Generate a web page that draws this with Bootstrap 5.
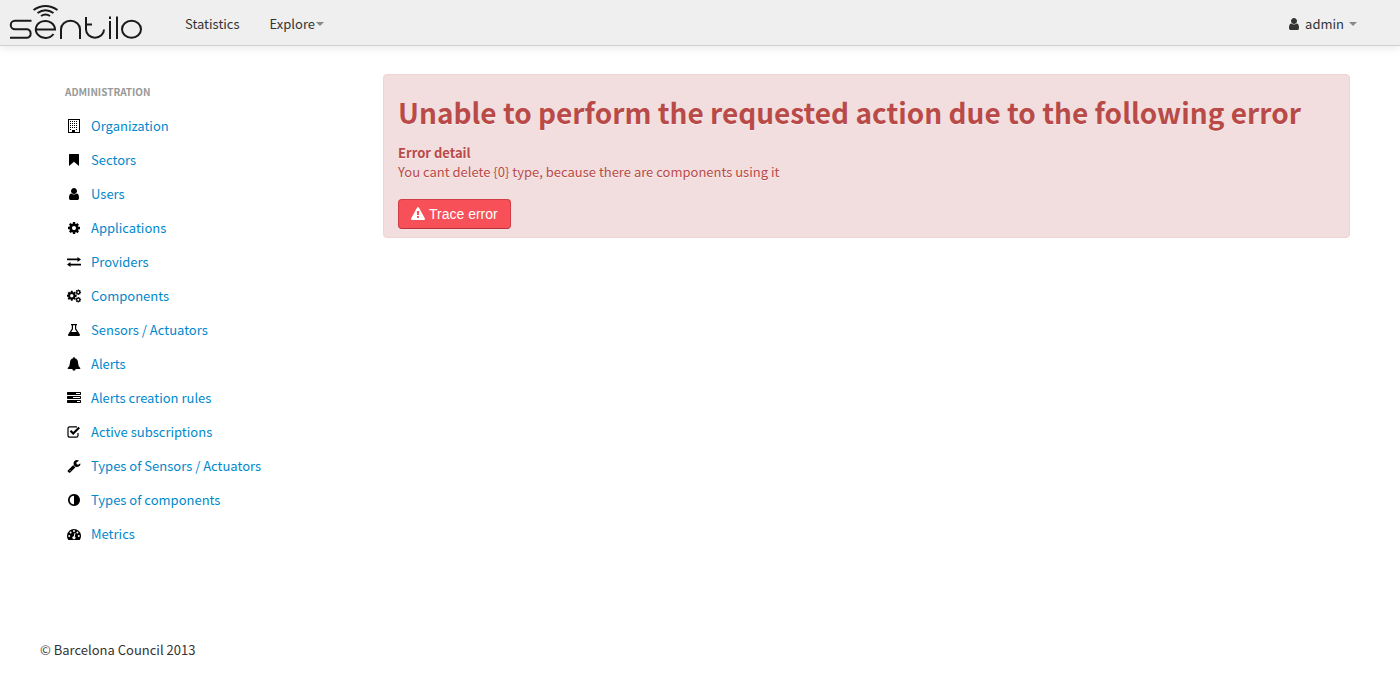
<!DOCTYPE html>
<html lang="en">
<head>
<meta charset="utf-8">
<meta name="viewport" content="width=device-width, initial-scale=1">
<title>Sentilo</title>
<link href="https://cdn.jsdelivr.net/npm/bootstrap@5.3.0/dist/css/bootstrap.min.css" rel="stylesheet">
<style>
body { font-family: "Noto Sans CJK SC", sans-serif; font-size: 13px; line-height: 20px; color: #333; }
.topbar { background: #efefef; border-bottom: 1px solid #d0d0d0; box-shadow: 0 1px 10px rgba(0,0,0,.1); min-height: 46px; }
.topbar .navbar-nav .nav-link { color: #333; padding: 2px 15px 0; }
.topbar .dropdown-toggle::after { border-width: 4px 4px 0; border-top-color: #888; margin-left: 1px; vertical-align: 3px; }
.topbar .account::after { margin-left: 5px; }
.icon { width: 14px; height: 14px; fill: currentColor; flex: none; }
.page { padding: 28px 50px 0; }
.side { padding: 8px 15px; }
.side h2 { font-size: 10px; font-weight: 700; line-height: 20px; color: #999; margin: 0 0 7px; }
.side a { color: #08c; text-decoration: none; line-height: 20px; padding: 7px 0; }
.side .icon { color: #000; margin: 0 10px 0 2px; }
.error-box { background: #f2dede; border: 1px solid #eed3d7; border-radius: 4px; color: #b94a48; padding: 17px 14px 8px; text-shadow: 0 1px 0 rgba(255,255,255,.5); }
.error-box h1 { font-size: 28px; line-height: 40px; font-weight: 700; margin: 0 0 11px; }
.error-box p { line-height: 19px; margin: 0 0 18px; }
.btn-trace { background: #f85058; border: 1px solid #d23c46; border-bottom-color: #b8323c; color: #fff; font: 14px/20px "Liberation Sans", sans-serif; padding: 4px 12px; border-radius: 4px; }
.btn-trace:hover { background: #e0404a; color: #fff; }
.site-footer { padding: 81px 40px 40px; }
</style>
</head>
<body>
<svg class="d-none" aria-hidden="true">
<symbol id="user" viewBox="0 0 1792 1792"><path d="M1536 1399q0 109-62.500 187t-150.500 78h-854q-88 0-150.500-78t-62.500-187q0-85 8.500-160.500t31.500-152 58.500-131 94-89 134.500-34.500q131 128 313 128t313-128q76 0 134.500 34.500t94 89 58.500 131 31.500 152 8.500 160.500zm-256-887q0 159-112.500 271.500t-271.500 112.500-271.500-112.500-112.500-271.500 112.500-271.500 271.500-112.500 271.500 112.500 112.500 271.500z"/></symbol>
<symbol id="cog" viewBox="0 0 1792 1792"><path d="M1152 896q0-106-75-181t-181-75-181 75-75 181 75 181 181 75 181-75 75-181zm512-109v222q0 12-8 23t-20 13l-185 28q-19 54-39 91 35 50 107 138 10 12 10 25t-9 23q-27 37-99 108t-94 71q-12 0-26-9l-138-108q-44 23-91 38-16 136-29 186-7 28-36 28h-222q-14 0-24.500-8.500t-11.500-21.500l-28-184q-49-16-90-37l-141 107q-10 9-25 9-14 0-25-11-126-114-165-168-7-10-7-23 0-12 8-23 15-21 51-66.500t54-70.500q-27-50-41-99l-183-27q-13-2-21-12.500t-8-23.500v-222q0-12 8-23t19-13l186-28q14-46 39-92-40-57-107-138-10-12-10-24 0-10 9-23 26-36 98.500-107.500t94.500-71.500q13 0 26 10l138 107q44-23 91-38 16-136 29-186 7-28 36-28h222q14 0 24.500 8.500t11.500 21.500l28 184q49 16 90 37l142-107q9-9 24-9 13 0 25 10 129 119 165 170 7 8 7 22 0 12-8 23-15 21-51 66.500t-54 70.500q26 50 41 98l183 28q13 2 21 12.500t8 23.500z"/></symbol>
<symbol id="cogs" viewBox="0 0 14 14"><use href="#cog" x="-1" y="1" width="11.500" height="11.500"/><use href="#cog" x="8" y="0" width="6.500" height="6.500"/><use href="#cog" x="8" y="7.500" width="6.500" height="6.500"/></symbol>
<symbol id="warning" viewBox="0 0 1792 1792"><path d="M1024 1375v-190q0-14-9.500-23.500t-22.500-9.500h-192q-13 0-22.500 9.500t-9.500 23.500v190q0 14 9.500 23.500t22.500 9.500h192q13 0 22.500-9.500t9.500-23.500zm-2-374l18-459q0-12-10-19-13-11-24-11h-220q-11 0-24 11-10 7-10 21l17 457q0 10 10 16.500t24 6.500h185q14 0 23.500-6.500t10.500-16.500zm-14-934l768 1408q35 63-2 126-17 29-46.500 46t-63.500 17h-1536q-34 0-63.500-17t-46.500-46q-37-63-2-126l768-1408q17-31 47-49t65-18 65 18 47 49z"/></symbol>
<symbol id="adjust" viewBox="0 0 1792 1792"><path d="M896 1440v-1088q-148 0-273 73t-198 198-73 273 73 273 198 198 273 73zm768-544q0 209-103 385.500t-279.500 279.500-385.500 103-385.500-103-279.500-279.500-103-385.500 103-385.500 279.500-279.500 385.500-103 385.500 103 279.500 279.500 103 385.500z"/></symbol>
<symbol id="wrench" viewBox="0 0 1792 1792"><path d="M448 1472q0-26-19-45t-45-19-45 19-19 45 19 45 45 19 45-19 19-45zm644-420l-682 682q-37 37-90 37-52 0-91-37l-106-108q-38-36-38-90 0-53 38-91l681-681q39 98 114.500 173.500t173.500 114.500zm634-435q0 39-23 106-47 134-164.500 217.500t-258.500 83.500q-185 0-316.500-131.500t-131.500-316.500 131.500-316.500 316.500-131.500q58 0 121.500 16.500t107.500 46.500q16 11 16 28t-16 28l-293 169v224l193 107q5-3 79-48.500t135.500-81 70.500-35.500q15 0 23.500 10t8.500 25z"/></symbol>
<symbol id="building" viewBox="0 0 14 14"><path fill-rule="evenodd" d="M1 0h12v14H1zM2 1v12h3v-2h3v2h4V1z"/><path d="M3 2h1v1H3zm2 0h1v1H5zm2 0h1v1H7zm2 0h1v1H9zM3 4h1v1H3zm2 0h1v1H5zm2 0h1v1H7zm2 0h1v1H9zM3 6h1v1H3zm2 0h1v1H5zm2 0h1v1H7zm2 0h1v1H9zM3 8h1v1H3zm2 0h1v1H5zm2 0h1v1H7zm2 0h1v1H9zM3 10h1v1H3zm6 0h1v1H9z"/></symbol>
<symbol id="bookmark" viewBox="0 0 14 14"><path d="M2.600 1h8.800q.6 0 .6.600V13L7 8.700 2 13V1.600Q2 1 2.600 1z"/></symbol>
<symbol id="exchange" viewBox="0 0 14 14"><path d="M0 3.500h10.500V2L14 4.500 10.500 7V5.300H0zM14 8.700H3.500V7L0 9.600l3.500 2.400v-1.500H14z"/></symbol>
<symbol id="flask" viewBox="0 0 14 14"><path fill-rule="evenodd" d="M4 1h6v1.200H9.200v3.600l3.600 5.500Q13.600 13 12 13H2Q.4 13 1.200 11.300l3.600-5.500V2.200H4zm2 1.200v4L4.200 9h5.600L8 6.200v-4z"/></symbol>
<symbol id="bell" viewBox="0 0 14 14"><path d="M7 0q.9 0 .8 1.200Q11 2 11 5.500q0 4 2.500 5.700-.2.800-1 .8H8.700Q8.500 13.700 7 13.700T5.300 12H1.500q-.8 0-1-.8Q3 9.500 3 5.500 3 2 6.200 1.200 6.100 0 7 0z"/></symbol>
<symbol id="tasks" viewBox="0 0 14 14"><path fill-rule="evenodd" d="M.5 1h13l.5.500v2l-.5.500H.5L0 3.500v-2zM9 2v1h4V2zM.5 5h13l.5.500v2l-.5.500H.5L0 7.500v-2zM6 6v1h7V6zM.5 9h13l.5.500v2l-.5.500H.5L0 11.500v-2zM10 10v1h3v-1z"/></symbol>
<symbol id="check" viewBox="0 0 14 14"><path d="M11 8v2.500a1.700 1.700 0 0 1-1.700 1.700H2.700A1.700 1.700 0 0 1 1 10.500v-7a1.700 1.700 0 0 1 1.700-1.700h7.300" fill="none" stroke="currentColor" stroke-width="1.200"/><path d="M3.500 5.800l2.700 2.700 6-6" fill="none" stroke="currentColor" stroke-width="2.200"/></symbol>
<symbol id="gauge" viewBox="0 0 14 14"><path fill-rule="evenodd" d="M1.300 13A7 7 0 1 1 12.700 13zM1.200 9a1 1 0 1 0 2 0 1 1 0 0 0-2 0zM2.600 5.500a1 1 0 1 0 2 0 1 1 0 0 0-2 0zM6 4a1 1 0 1 0 2 0 1 1 0 0 0-2 0zM9.400 5.500a1 1 0 1 0 2 0 1 1 0 0 0-2 0zM10.800 9a1 1 0 1 0 2 0 1 1 0 0 0-2 0zM7.600 5.700l-.9 3.500a1.500 1.500 0 1 0 1.100.3l.7-3.500z"/></symbol>
</svg>
<nav class="topbar navbar navbar-expand p-0" aria-label="Main">
<a class="navbar-brand p-0 m-0" href="#" aria-label="Sentilo"><svg class="d-block" width="170" height="45" viewBox="0 0 170 45" fill="none" stroke="#1a1a1a" stroke-width="2"><path d="M31.500 20.700H15a4.200 4.200 0 0 0 0 8.500H27a4.300 4.300 0 0 1 0 8.500H10M36 29.500H55A9.600 8.500 0 1 0 53.500 34M61 39V29.200a9.500 8.500 0 0 1 19 0V39M86 17V29.500a9 8.200 0 0 0 18 0M86 24.500h6M110 21V39M110 16.500v2.500M117 16.500V39M33.500 10q12-8 24 0M37.500 13q8-5.500 16 0M41 16q4.500-3 9 0"/><ellipse cx="131.500" cy="29.200" rx="9.500" ry="8.500"/></svg></a>
<div class="navbar-nav me-auto"><a class="nav-link" href="#">Statistics</a><a class="nav-link dropdown-toggle" href="#" role="button" data-bs-toggle="dropdown">Explore</a></div>
<div class="navbar-nav me-4"><a class="nav-link dropdown-toggle account d-flex align-items-center me-1" href="#" role="button" data-bs-toggle="dropdown"><svg class="icon me-1"><use href="#user"/></svg>admin</a></div>
</nav>
<div class="container-fluid page"><div class="row" style="--bs-gutter-x:32px">
<aside class="col-3"><nav class="side d-flex flex-column" aria-label="Administration">
<h2>ADMINISTRATION</h2>
<a class="d-flex align-items-center" href="#"><svg class="icon"><use href="#building"/></svg>Organization</a>
<a class="d-flex align-items-center" href="#"><svg class="icon"><use href="#bookmark"/></svg>Sectors</a>
<a class="d-flex align-items-center" href="#"><svg class="icon"><use href="#user"/></svg>Users</a>
<a class="d-flex align-items-center" href="#"><svg class="icon"><use href="#cog"/></svg>Applications</a>
<a class="d-flex align-items-center" href="#"><svg class="icon"><use href="#exchange"/></svg>Providers</a>
<a class="d-flex align-items-center" href="#"><svg class="icon"><use href="#cogs"/></svg>Components</a>
<a class="d-flex align-items-center" href="#"><svg class="icon"><use href="#flask"/></svg>Sensors / Actuators</a>
<a class="d-flex align-items-center" href="#"><svg class="icon"><use href="#bell"/></svg>Alerts</a>
<a class="d-flex align-items-center" href="#"><svg class="icon"><use href="#tasks"/></svg>Alerts creation rules</a>
<a class="d-flex align-items-center" href="#"><svg class="icon"><use href="#check"/></svg>Active subscriptions</a>
<a class="d-flex align-items-center" href="#"><svg class="icon"><use href="#wrench"/></svg>Types of Sensors / Actuators</a>
<a class="d-flex align-items-center" href="#"><svg class="icon"><use href="#adjust"/></svg>Types of components</a>
<a class="d-flex align-items-center" href="#"><svg class="icon"><use href="#gauge"/></svg>Metrics</a>
</nav></aside>
<main class="col-9"><div class="error-box" role="alert">
<h1>Unable to perform the requested action due to the following error</h1>
<p><strong>Error detail</strong><br>You cant delete {0} type, because there are components using it</p>
<button type="button" class="btn btn-trace d-flex align-items-center"><svg class="icon me-1"><use href="#warning"/></svg>Trace error</button>
</div></main>
</div></div>
<footer class="site-footer">© Barcelona Council 2013</footer>
<script src="https://cdn.jsdelivr.net/npm/bootstrap@5.3.0/dist/js/bootstrap.bundle.min.js"></script>
</body>
</html>
